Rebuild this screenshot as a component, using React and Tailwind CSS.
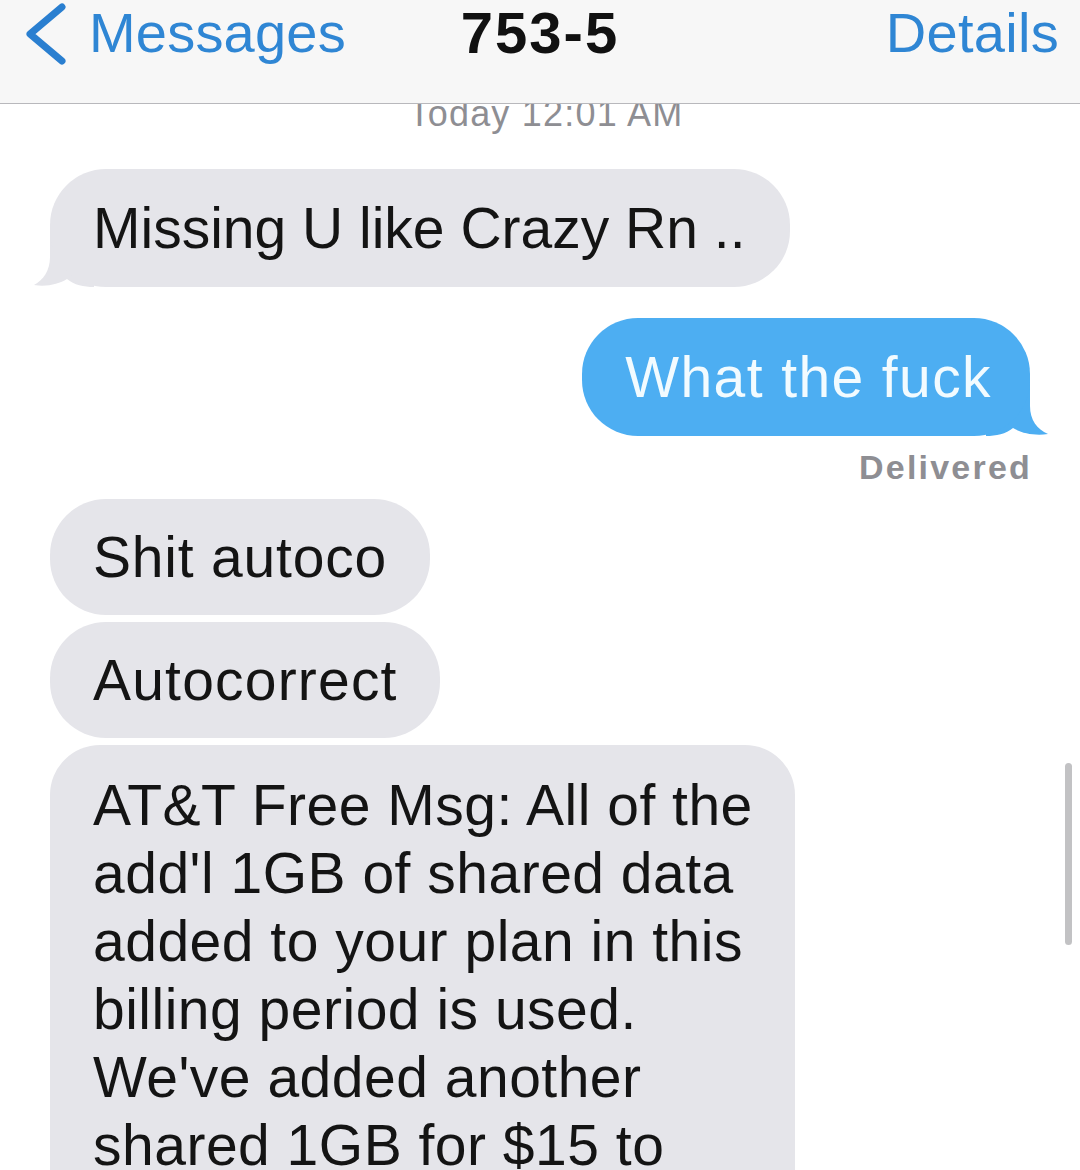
import React from "react";

function LeftTail({ color = "#e5e5ea" }) {
  return (
    <svg
      className="absolute left-[-16px] bottom-0"
      width="60"
      height="60"
      viewBox="0 0 60 60"
    >
      <path
        d="M16 0 L16 30 C16 44 9 53 0 58 C13 60 25 57 33 52 C40 58 50 60 60 60 L60 0 Z"
        fill={color}
      />
    </svg>
  );
}

function RightTail({ color = "#4daef2" }) {
  return (
    <svg
      className="absolute right-[-18px] bottom-0"
      width="62"
      height="60"
      viewBox="0 0 62 60"
    >
      <path
        d="M44 0 L44 30 C44 44 51 53 62 58 C48 60 35 57 27 52 C20 58 10 60 0 60 L0 0 Z"
        fill={color}
      />
    </svg>
  );
}

export default function App() {
  return (
    <div
      className="relative w-[1080px] h-[1170px] overflow-hidden bg-white"
      style={{ fontFamily: '"Liberation Sans", Arial, sans-serif' }}
    >
      {/* Nav bar */}
      <div className="relative z-10 h-[104px] bg-[#f7f7f7] border-b border-[#b8b8bc] grid grid-cols-[1fr_auto_1fr] items-start pt-[3px]">
        <div className="flex items-start pl-[23px] gap-[22px] text-[#2f86d4]">
          <svg width="44" height="64" viewBox="0 0 44 64" className="-mt-[2px]">
            <polyline
              points="39,6 7,33 39,60"
              fill="none"
              stroke="#2a7fd0"
              strokeWidth="7"
              strokeLinecap="round"
              strokeLinejoin="round"
            />
          </svg>
          <span className="text-[56px] leading-[60px] tracking-[0.2px]">Messages</span>
        </div>
        <div className="text-[58px] leading-[60px] font-bold text-[#111] tracking-[2px] px-[4px]">
          753-5
        </div>
        <div className="flex justify-end pr-[21px] text-[#2f86d4] text-[56px] leading-[60px] tracking-[0.3px]">
          Details
        </div>
      </div>

      {/* Timestamp */}
      <div className="-mt-[8px] text-center text-[36px] leading-[36px] text-[#8e8e93] tracking-[1.2px] pl-[12px]">
        Today 12:01 AM
      </div>

      {/* Messages */}
      <div className="flex flex-col pl-[50px] pr-[50px] text-[57px] leading-[68px] text-[#141414]">
        <div className="mt-[37px] self-start relative">
          <LeftTail />
          <div className="relative bg-[#e5e5ea] rounded-[56px] pl-[43px] pr-[45px] py-[25px] whitespace-nowrap">
            Missing U like Crazy Rn ..
          </div>
        </div>

        <div className="mt-[31px] self-end relative">
          <RightTail />
          <div className="relative bg-[#4daef2] text-[#f2fbff] rounded-[56px] pl-[43px] pr-[38px] py-[25px] whitespace-nowrap tracking-[1.4px]">
            What the fuck
          </div>
        </div>

        <div className="self-end mt-[13px] text-[34px] leading-[36px] font-bold text-[#8e8e93] tracking-[2.2px] -mr-[2px]">
          Delivered
        </div>

        <div className="mt-[14px] self-start bg-[#e5e5ea] rounded-[56px] pl-[43px] pr-[43px] py-[24px] whitespace-nowrap tracking-[0.8px]">
          Shit autoco
        </div>

        <div className="mt-[7px] self-start bg-[#e5e5ea] rounded-[56px] pl-[43px] pr-[42px] py-[24px] whitespace-nowrap tracking-[1.2px]">
          Autocorrect
        </div>

        <div className="mt-[7px] self-start w-[745px] bg-[#e5e5ea] rounded-[50px] pl-[43px] pr-[30px] pt-[26px] pb-[40px] leading-[68px] tracking-[0.5px]">
          <span className="block whitespace-nowrap">AT&amp;T Free Msg: All of the</span>
          <span className="block whitespace-nowrap">add'l 1GB of shared data</span>
          <span className="block whitespace-nowrap">added to your plan in this</span>
          <span className="block whitespace-nowrap">billing period is used.</span>
          <span className="block whitespace-nowrap">We've added another</span>
          <span className="block whitespace-nowrap">shared 1GB for $15 to</span>
          <span className="block whitespace-nowrap">your account.</span>
        </div>
      </div>

      {/* Scroll indicator */}
      <div className="absolute right-[8px] top-[763px] w-[7px] h-[182px] rounded-full bg-[#c2c2c4]" />
    </div>
  );
}
